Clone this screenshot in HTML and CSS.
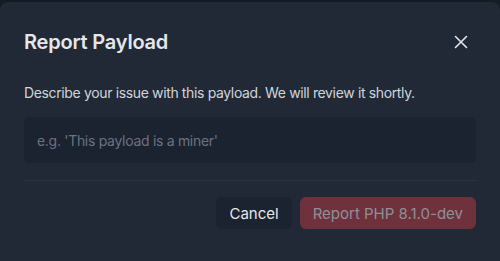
FILE: index.html
```html
<!DOCTYPE html>
<html>
<head>
<meta charset="utf-8">
<link rel="stylesheet" href="styles.css">
</head>
<body>
<div class="modal">
  <div class="header">
    <h2 class="title">Report Payload</h2>
    <button class="close" aria-label="Close">
      <svg width="14" height="14" viewBox="0 0 14 14"><path d="M1.5 1.5 L12.5 12.5 M12.5 1.5 L1.5 12.5" stroke="#e5e7eb" stroke-width="1.6" stroke-linecap="round" fill="none"/></svg>
    </button>
  </div>
  <p class="desc">Describe your issue with this payload. We will review it shortly.</p>
  <input class="field" type="text" placeholder="e.g. 'This payload is a miner'">
  <div class="divider"></div>
  <div class="actions">
    <button class="btn cancel">Cancel</button>
    <button class="btn report" disabled>Report PHP 8.1.0-dev</button>
  </div>
</div>
</body>
</html>
```
FILE: styles.css
```css
html, body {
  margin: 0;
  padding: 0;
  background: #151b25;
  height: 100%;
  overflow: hidden;
}
body {
  padding-top: 2px;
  font-family: Inter, "Noto Sans", sans-serif;
}
.modal {
  width: 500px;
  box-sizing: border-box;
  background: #212936;
  border-radius: 8px;
  padding: 24px 24px 40px;
  min-height: 270px;
}
.header {
  display: flex;
  align-items: center;
  justify-content: space-between;
  height: 32px;
}
.title {
  margin: 0;
  font-size: 20px;
  font-weight: 600;
  color: #e5e7eb;
  letter-spacing: -0.2px;
}
.close {
  background: none;
  border: 0;
  padding: 0;
  width: 14px;
  height: 14px;
  margin-right: 8px;
  display: flex;
}
.desc {
  margin: 25px 0 0;
  font-size: 14px;
  line-height: 20px;
  color: #d1d5db;
  letter-spacing: -0.36px;
}
.field {
  display: block;
  margin-top: 14px;
  width: 100%;
  box-sizing: border-box;
  height: 46px;
  border: 0;
  border-radius: 6px;
  background: #1b2230;
  padding: 0 13px;
  font-family: inherit;
  font-size: 14px;
  letter-spacing: -0.3px;
  color: #e5e7eb;
  outline: none;
}
.field::placeholder {
  color: #6b7280;
}
.divider {
  margin-top: 17px;
  height: 1px;
  background: #2c3443;
}
.actions {
  display: flex;
  justify-content: flex-end;
  gap: 8px;
  margin-top: 16px;
}
.btn {
  height: 32px;
  border: 0;
  border-radius: 6px;
  font-family: inherit;
  font-size: 15px;
  padding: 0 13px;
}
.cancel {
  background: #1b2230;
  color: #e5e7eb;
}
.report {
  background: #6f313c;
  color: #8e9098;
}
```
